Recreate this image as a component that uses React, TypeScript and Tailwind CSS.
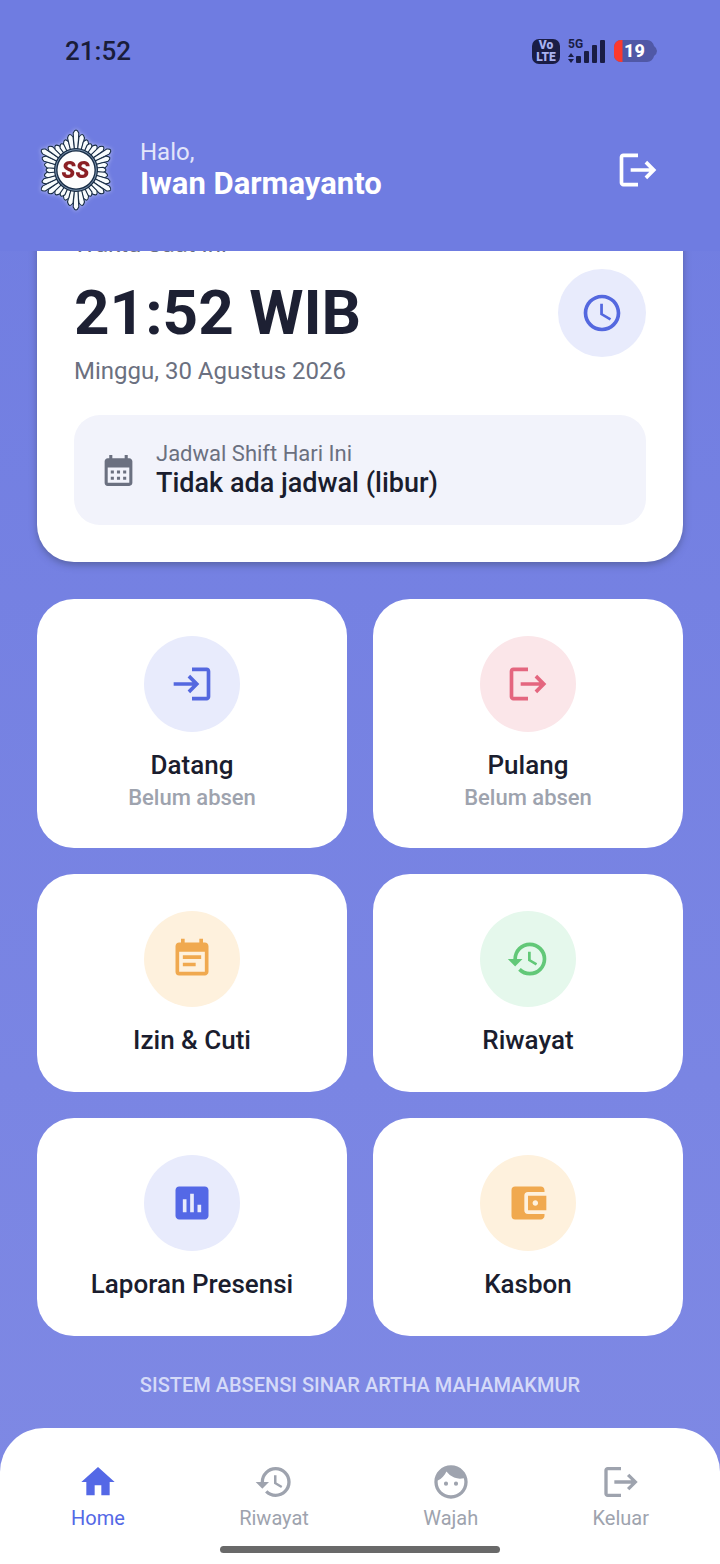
import type { IconType } from 'react-icons';
import {
  MdAccessTime,
  MdAccountBalanceWallet,
  MdCalendarMonth,
  MdEventNote,
  MdFace,
  MdHistory,
  MdHome,
  MdInsertChart,
  MdLogin,
  MdLogout,
} from 'react-icons/md';

interface MenuItem {
  title: string;
  subtitle?: string;
  icon: IconType;
  badge: string;
}

const MENU: MenuItem[] = [
  { title: 'Datang', subtitle: 'Belum absen', icon: MdLogin, badge: 'bg-[#e8ebfc] text-[#5468df]' },
  { title: 'Pulang', subtitle: 'Belum absen', icon: MdLogout, badge: 'bg-[#fbe6e9] text-[#e4667f]' },
  { title: 'Izin & Cuti', icon: MdEventNote, badge: 'bg-[#fef1dd] text-[#f0a94f]' },
  { title: 'Riwayat', icon: MdHistory, badge: 'bg-[#e5f8ec] text-[#62c878]' },
  { title: 'Laporan Presensi', icon: MdInsertChart, badge: 'bg-[#e8ebfc] text-[#5468e6]' },
  { title: 'Kasbon', icon: MdAccountBalanceWallet, badge: 'bg-[#fef1dd] text-[#f0a94f]' },
];

const NAV = [
  { label: 'Home', icon: MdHome, active: true },
  { label: 'Riwayat', icon: MdHistory, active: false },
  { label: 'Wajah', icon: MdFace, active: false },
  { label: 'Keluar', icon: MdLogout, active: false },
];

// Ray lengths repeat every 60 degrees, longest at the six tips of the star
const RAY_LENGTHS = [40, 36, 32, 30, 32, 36];

function Logo() {
  const rays = Array.from({ length: 36 }, (_, i) => ({ angle: i * 10, length: RAY_LENGTHS[i % 6] }));
  return (
    <svg className="w-[72px] h-[84px] drop-shadow-[0_0_2px_rgba(255,255,255,0.5)]" viewBox="-36 -42 72 84" aria-label="Logo SS">
      {rays.map(({ angle, length }) => (
        <path
          key={angle}
          transform={`rotate(${angle})`}
          d={`M-1.8 -18 L-2.8 ${3 - length} Q0 ${-length - 3} 2.8 ${3 - length} L1.8 -18 Z`}
          fill="#f8fcfd"
          stroke="#172c45"
          strokeWidth="1.1"
        />
      ))}
      <circle r="22" fill="#172c45" />
      <circle r="20.3" fill="none" stroke="#8aa3bd" strokeWidth="0.9" />
      <circle r="18.5" fill="#fdfdfd" />
      <text
        x="-0.5"
        y="7.5"
        textAnchor="middle"
        fontFamily="Roboto, sans-serif"
        fontSize="23"
        fontWeight="900"
        fontStyle="italic"
        fill="#8b1f24"
      >
        SS
      </text>
    </svg>
  );
}

function StatusBar() {
  return (
    <div className="flex items-center justify-between h-[102px] pl-[65px] pr-[63px]">
      <span className="text-[26px] leading-8 font-medium text-[#1a1d3a]">21:52</span>
      <div className="flex items-center gap-2">
        <div className="flex flex-col items-center justify-center w-7 h-[25px] rounded-[7px] bg-[#1a1d45] text-xs leading-3 font-black text-[#a9b2f0]">
          <span>Vo</span>
          <span>LTE</span>
        </div>
        <div className="relative">
          <svg className="w-[38px] h-[26px]" viewBox="0 0 38 26" fill="#1a1d45">
            <path d="M0 19l3-4 3 4zM0 21h6l-3 4z" />
            <rect x="8" y="18" width="5" height="7" rx="1" />
            <rect x="16" y="13" width="5" height="12" rx="1" />
            <rect x="24" y="7" width="5" height="18" rx="1" />
            <rect x="32" y="2" width="5" height="23" rx="1" />
          </svg>
          <span className="absolute left-0 top-0 text-xs leading-3 font-bold text-[#1a1d45]">5G</span>
        </div>
        <div className="relative flex items-center justify-center w-[43px] h-6">
          <svg className="absolute inset-0" viewBox="0 0 43 24">
            <path d="M7 1h26a7 7 0 0 1 7 6q3 2 3 5t-3 5a7 7 0 0 1-7 6H7a7 7 0 0 1-7-7V8a7 7 0 0 1 7-7z" fill="#5058a6" />
            <path d="M8.500 1H7a7 7 0 0 0-7 7v8a7 7 0 0 0 7 7h1.500z" fill="#fb392d" />
          </svg>
          <span className="relative pr-0.5 text-lg leading-6 font-extrabold text-white">19</span>
        </div>
      </div>
    </div>
  );
}

function Header() {
  return (
    <header className="relative z-10 bg-[#6f7ce1]">
      <StatusBar />
      <div className="flex items-center h-[149px] pl-10 pr-[60px] pb-[14px]">
        <Logo />
        <div className="flex-1 ml-7">
          <p className="text-2xl leading-7 text-[#e2e5fa]">Halo,</p>
          <h1 className="text-[31px] leading-9 font-bold text-white">Iwan Darmayanto</h1>
        </div>
        <button type="button" aria-label="Keluar" className="text-white">
          <MdLogout size={44} />
        </button>
      </div>
    </header>
  );
}

function ClockCard() {
  return (
    <section className="-mt-[58px] p-[37px] rounded-[37px] bg-white shadow-[0_3px_7px_rgba(60,70,110,0.5)]">
      <p className="text-2xl leading-7 text-[#6b7080]">Waktu Saat Ini</p>
      <div className="flex items-center justify-between mt-[11px]">
        <p className="text-[62px] leading-[72px] font-bold text-[#1d2033]">21:52 WIB</p>
        <div className="flex items-center justify-center size-[88px] rounded-full bg-[#e8ebfc] text-[#5468df]">
          <MdAccessTime size={44} />
        </div>
      </div>
      <p className="text-2xl leading-7 text-[#6b7080]">Minggu, 30 Agustus 2026</p>

      {/* Shift */}
      <div className="flex items-center gap-[19px] mt-[30px] p-[26px] rounded-[26px] bg-[#f2f3fb]">
        <MdCalendarMonth size={37} className="text-[#6b7080]" />
        <div>
          <p className="text-[22px] leading-[26px] text-[#6b7080]">Jadwal Shift Hari Ini</p>
          <p className="text-[27px] leading-8 font-medium text-[#1a1d2e]">Tidak ada jadwal (libur)</p>
        </div>
      </div>
    </section>
  );
}

function MenuTile({ title, subtitle, icon: Icon, badge }: MenuItem) {
  return (
    <button type="button" className="flex flex-col items-center p-[37px] rounded-[37px] bg-white">
      <span className={`flex items-center justify-center size-24 rounded-full ${badge}`}>
        <Icon size={44} />
      </span>
      <span className="mt-[18px] text-[26px] leading-[30px] font-medium whitespace-nowrap text-[#1a1d2e]">{title}</span>
      {subtitle && <span className="mt-1 text-[22px] leading-[27px] font-medium text-[#9ea3ae]">{subtitle}</span>}
    </button>
  );
}

function BottomNav() {
  return (
    <nav className="rounded-t-[44px] bg-white pt-[34px] pb-[11px]">
      <div className="flex justify-between px-[71px]">
        {NAV.map(({ label, icon: Icon, active }) => (
          <a
            key={label}
            href="#"
            className={`flex flex-col items-center gap-[3px] text-xl leading-[26px] ${active ? 'text-[#5468e6]' : 'text-[#9ea3ae]'}`}
          >
            <Icon size={40} />
            {label}
          </a>
        ))}
      </div>
      <div className="mx-auto mt-[15px] w-[280px] h-[7px] rounded-full bg-[#696969]" />
    </nav>
  );
}

export default function App() {
  return (
    <div className="flex flex-col min-h-screen bg-linear-to-b from-[#6f7ce1] to-[#7f89e4] font-[Roboto,sans-serif]">
      <Header />
      <main className="flex-1 px-[37px] pb-[29px]">
        <ClockCard />
        <div className="grid grid-cols-2 gap-[26px] mt-[37px]">
          {MENU.map((item) => (
            <MenuTile key={item.title} {...item} />
          ))}
        </div>
        <p className="mt-9 text-center text-xl leading-[26px] font-medium text-[#d5daf8]">
          SISTEM ABSENSI SINAR ARTHA MAHAMAKMUR
        </p>
      </main>
      <BottomNav />
    </div>
  );
}
